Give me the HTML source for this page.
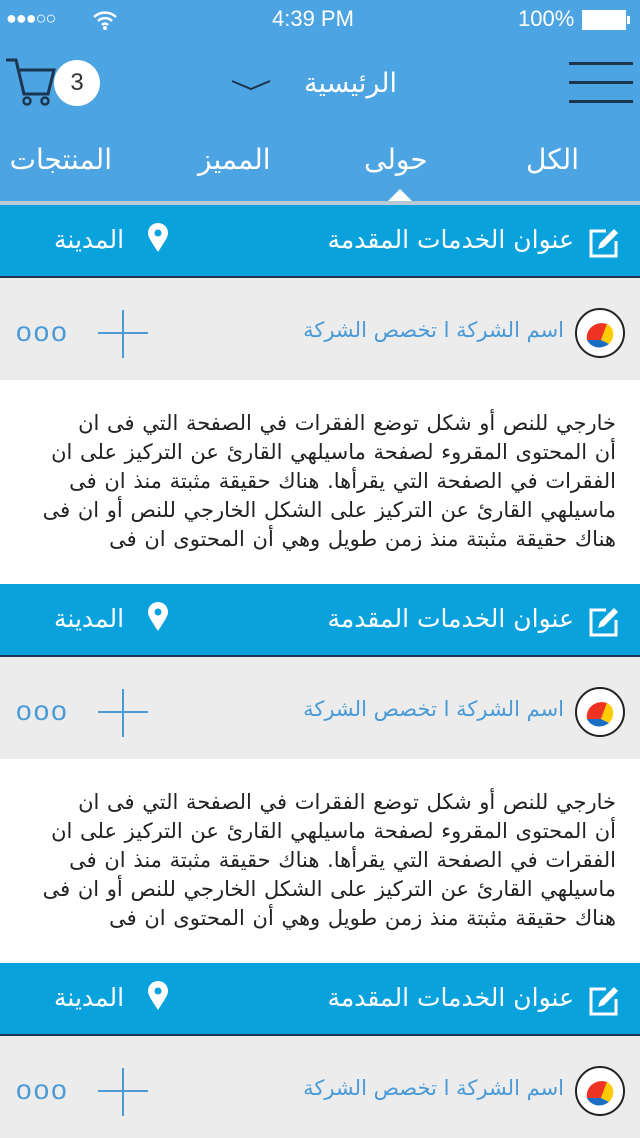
<!DOCTYPE html>
<html><head><meta charset="utf-8"><style>
*{margin:0;padding:0;box-sizing:border-box}
body{width:640px;height:1136px;overflow:hidden;background:#fff;font-family:"DejaVu Sans","Liberation Sans",sans-serif;position:relative}
.top{position:absolute;left:0;top:0;width:640px;height:201px;background:#4ca4e2}
.status{position:absolute;top:6px;color:#fff;font-family:"Liberation Sans",sans-serif;font-size:22px}
.abs{position:absolute}
.tab{position:absolute;top:143px;color:#fff;font-size:28px;direction:rtl}
.sep{position:absolute;left:0;top:201px;width:640px;height:4px;background:#b9c9d6}
.hdr{position:absolute;left:0;width:640px;height:73px;background:#0aa2dd;border-bottom:2px solid #1d3550;color:#fff;font-size:25px}
.row{position:absolute;left:0;width:640px;height:102px;background:#ececec}
.txt{position:absolute;left:0;width:640px;height:200px;background:#fff;direction:rtl;text-align:right;padding:29px 24px 0 0;font-size:21px;word-spacing:1px;line-height:29px;color:#222;white-space:nowrap}
.co{position:absolute;right:76px;top:40px;color:#4a9ad7;font-size:21px;direction:rtl}
.logo{position:absolute;right:15px;top:30px;width:50px;height:50px;border:2px solid #222;border-radius:50%;background:#fff}
</style></head><body>
<div class="top">
 <div class="status" style="left:6px;top:8px;font-size:18px;letter-spacing:-1px">●●●○○</div>
 <svg class="abs" style="left:92px;top:10px" width="26" height="20" viewBox="0 0 26 20"><path d="M2 7a16 16 0 0 1 22 0M6 11a10 10 0 0 1 14 0M10 15a4 4 0 0 1 6 0" stroke="#fff" stroke-width="2.5" fill="none"/><circle cx="13" cy="18" r="2" fill="#fff"/></svg>
 <div class="status" style="left:272px">4:39 PM</div>
 <div class="status" style="left:518px">100%</div>
 <div class="abs" style="left:582px;top:10px;width:44px;height:20px;border:1px solid #fff;background:#fff"></div>
 <div class="abs" style="left:627px;top:16px;width:3px;height:8px;background:#fff"></div>
 <svg class="abs" style="left:4px;top:56px" width="52" height="52" viewBox="0 0 52 52"><path d="M2 4h10l8 34h24l6-24H16" stroke="#1d3550" stroke-width="3" fill="none"/><circle cx="23" cy="45" r="3.5" stroke="#1d3550" stroke-width="2.5" fill="none"/><circle cx="41" cy="45" r="3.5" stroke="#1d3550" stroke-width="2.5" fill="none"/></svg>
 <div class="abs" style="left:54px;top:60px;width:46px;height:46px;border-radius:50%;background:#fff;color:#333;font-family:'Liberation Sans';font-size:24px;text-align:center;line-height:46px">3</div>
 <svg class="abs" style="left:230px;top:78px" width="42" height="14"><path d="M2 3l19 8 19-8" stroke="#1d3550" stroke-width="2" fill="none"/></svg>
 <div class="abs" style="left:304px;top:68px;color:#fff;font-size:27px">الرئيسية</div>
 <div class="abs" style="left:569px;top:62px;width:64px;height:3px;background:#1d3550"></div>
 <div class="abs" style="left:569px;top:81px;width:64px;height:3px;background:#1d3550"></div>
 <div class="abs" style="left:569px;top:100px;width:64px;height:3px;background:#1d3550"></div>
 <div class="tab" style="left:526px">الكل</div>
 <div class="tab" style="left:364px">حولى</div>
 <div class="tab" style="left:198px">المميز</div>
 <div class="tab" style="left:6px;width:106px;overflow:hidden;text-align:right">المنتجات</div>
 <div class="abs" style="left:388px;top:189px;width:0;height:0;border-left:12px solid transparent;border-right:12px solid transparent;border-bottom:12px solid #fff"></div>
</div>
<div class="sep"></div>

<div id="s"></div>
<script>
var tops=[205,584,963],h='';
tops.forEach(function(t){
h+='<div class="hdr" style="top:'+t+'px">'+
'<svg class="abs" style="left:588px;top:22px" width="32" height="32" viewBox="0 0 32 32"><path d="M18 4H3v25h25V14" stroke="#fff" stroke-width="3" fill="none"/><path d="M10 22l2-6 14-14 4 4-14 14z" fill="#fff"/></svg>'+
'<div class="abs" style="right:66px;top:20px;direction:rtl">عنوان الخدمات المقدمة</div>'+
'<svg class="abs" style="left:147px;top:18px" width="22" height="30" viewBox="0 0 22 30"><path d="M11 29C4 18 1 14 1 10a10 10 0 0 1 20 0c0 4-3 8-10 19z" fill="#fff"/><circle cx="11" cy="10" r="3.5" fill="#0aa2dd"/></svg>'+
'<div class="abs" style="left:54px;top:20px">المدينة</div></div>';
var r=t+73;
h+='<div class="row" style="top:'+r+'px">'+
'<div class="abs" style="left:16px;top:38px;color:#4a9ad7;font-family:Liberation Sans;font-size:28px;letter-spacing:2px">ooo</div>'+
'<div class="abs" style="left:98px;top:54px;width:50px;height:2px;background:#4a9ad7"></div>'+
'<div class="abs" style="left:122px;top:32px;width:2px;height:48px;background:#4a9ad7"></div>'+
'<div class="co">اسم الشركة ا تخصص الشركة</div>'+
'<div class="logo"><svg width="46" height="46" viewBox="0 0 46 46"><path d="M10 30c-2-10 8-20 20-16l-6 16z" fill="#e32"/><path d="M30 14c8 4 8 14 2 20l-8-4z" fill="#fc0"/><path d="M10 30c4 8 14 10 22 4l-8-4z" fill="#1a6fc4"/></svg></div></div>';
if(t<900){h+='<div class="txt" style="top:'+(r+102)+'px">خارجي للنص أو شكل توضع الفقرات في الصفحة التي فى ان<br>أن المحتوى المقروء لصفحة ماسيلهي القارئ عن التركيز على ان<br>الفقرات في الصفحة التي يقرأها. هناك حقيقة مثبتة منذ ان فى<br>ماسيلهي القارئ عن التركيز على الشكل الخارجي للنص أو ان فى<br>هناك حقيقة مثبتة منذ زمن طويل وهي أن المحتوى ان فى</div>';}
});
document.getElementById('s').innerHTML=h;
</script>
</body></html>
